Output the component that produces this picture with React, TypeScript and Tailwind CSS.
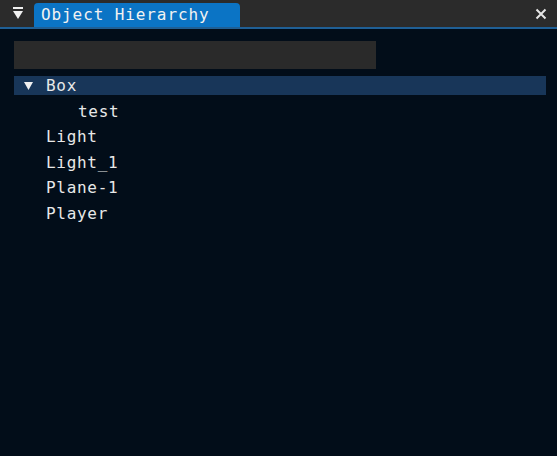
export default function App() {
  const items = ["Light", "Light_1", "Plane-1", "Player"];
  const mono = { fontFamily: '"DejaVu Sans Mono", "Liberation Mono", monospace' };

  return (
    <div className="flex h-[456px] w-[557px] flex-col bg-[#020d19] text-[#e8e8e8]" style={mono}>
      {/* title / tab bar */}
      <div className="flex h-[27px] shrink-0 items-end bg-[#2b2b2b]">
        <div className="flex h-[27px] w-[34px] items-center justify-center pl-[2px]">
          <svg width="12" height="13" viewBox="0 0 12 13">
            <rect x="1" y="0" width="10" height="2" fill="#f0f0f0" />
            <polygon points="1,4 11,4 6,12" fill="#f0f0f0" />
          </svg>
        </div>
        <div className="flex h-[24px] w-[206px] items-center rounded-t-[4px] bg-[#0b74c5] pl-[7px] text-[16px] tracking-[0.9px] text-[#f2f2f2]">
          Object Hierarchy
        </div>
        <div className="flex-1" />
        <div className="flex h-[27px] w-[30px] items-center justify-center pr-[2px]">
          <svg width="12" height="12" viewBox="0 0 12 12">
            <path d="M1.5 1.5 L10.5 10.5 M10.5 1.5 L1.5 10.5" stroke="#e6e6e6" strokeWidth="2" />
          </svg>
        </div>
      </div>
      <div className="h-[2px] shrink-0 bg-[#1f5f95]" />

      {/* body */}
      <div className="flex flex-col px-[14px] pt-[12px]">
        <div className="h-[28px] w-[362px] bg-[#2a2a2a]" />
        <div className="mt-[7px] flex h-[19px] w-[532px] items-center bg-[#183659] text-[16px] tracking-[0.7px]">
          <svg className="ml-[10px]" width="9" height="8" viewBox="0 0 9 8">
            <polygon points="0,0 9,0 4.5,8" fill="#f0f0f0" />
          </svg>
          <span className="ml-[13px]">Box</span>
        </div>
        <div className="mt-[4px] flex h-[25.5px] items-center pl-[64px] text-[16px] tracking-[0.7px]">test</div>
        {items.map((name) => (
          <div key={name} className="flex h-[25.5px] items-center pl-[32px] text-[16px] tracking-[0.7px]">
            {name}
          </div>
        ))}
      </div>
    </div>
  );
}
